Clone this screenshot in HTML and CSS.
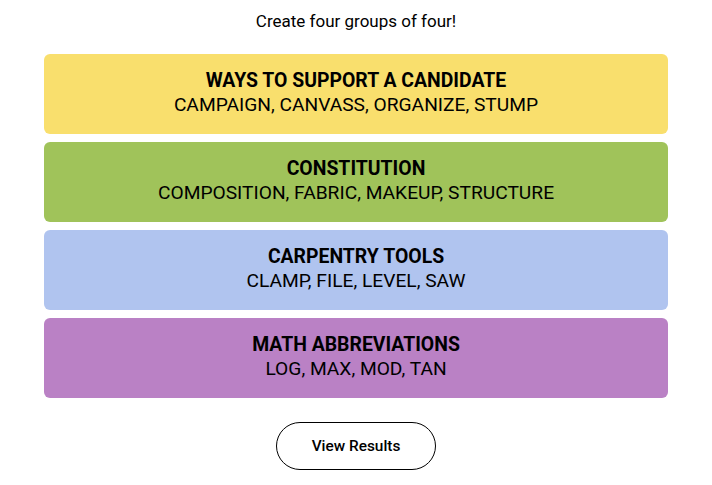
FILE: index.html
```html
<!DOCTYPE html>
<html>
<head>
<meta charset="utf-8">
<link rel="stylesheet" href="styles.css">
</head>
<body>
<main class="game">
  <p class="prompt">Create four groups of four!</p>
  <section class="groups">
    <div class="group yellow">
      <h3 class="group-title">WAYS TO SUPPORT A CANDIDATE</h3>
      <p class="group-words">CAMPAIGN, CANVASS, ORGANIZE, STUMP</p>
    </div>
    <div class="group green">
      <h3 class="group-title">CONSTITUTION</h3>
      <p class="group-words">COMPOSITION, FABRIC, MAKEUP, STRUCTURE</p>
    </div>
    <div class="group blue">
      <h3 class="group-title">CARPENTRY TOOLS</h3>
      <p class="group-words">CLAMP, FILE, LEVEL, SAW</p>
    </div>
    <div class="group purple">
      <h3 class="group-title">MATH ABBREVIATIONS</h3>
      <p class="group-words">LOG, MAX, MOD, TAN</p>
    </div>
  </section>
  <div class="actions">
    <button class="results-btn">View Results</button>
  </div>
</main>
</body>
</html>
```

FILE: styles.css
```css
* { box-sizing: border-box; }
html, body { margin: 0; padding: 0; background: #fff; }
body {
  font-family: Roboto, "Liberation Sans", sans-serif;
  color: #000;
}
.game {
  width: 624px;
  margin: 0 auto;
  display: flex;
  flex-direction: column;
  align-items: stretch;
}
.prompt {
  margin: 0;
  padding-top: 11px;
  height: 54px;
  text-align: center;
  font-size: 17px;
  line-height: 20px;
}
.groups {
  display: flex;
  flex-direction: column;
  gap: 8px;
}
.group {
  height: 80px;
  border-radius: 6px;
  display: flex;
  flex-direction: column;
  justify-content: center;
  align-items: center;
  text-align: center;
  padding-bottom: 2px;
}
.yellow { background: #f9df6d; }
.green { background: #a0c35a; }
.blue { background: #b0c4ef; }
.purple { background: #ba81c5; }
.group-title {
  margin: 0;
  font-size: 19.4px;
  font-weight: 700;
  line-height: 24px;
}
.group-words {
  margin: 0;
  font-size: 19.2px;
  font-weight: 400;
  line-height: 24px;
}
.actions {
  display: flex;
  justify-content: center;
  padding-top: 24px;
}
.results-btn {
  width: 160px;
  height: 48px;
  border: 1px solid #000;
  border-radius: 24px;
  background: #fff;
  font-family: Roboto, "Liberation Sans", sans-serif;
  font-size: 15.4px;
  font-weight: 500;
  color: #000;
}
```
